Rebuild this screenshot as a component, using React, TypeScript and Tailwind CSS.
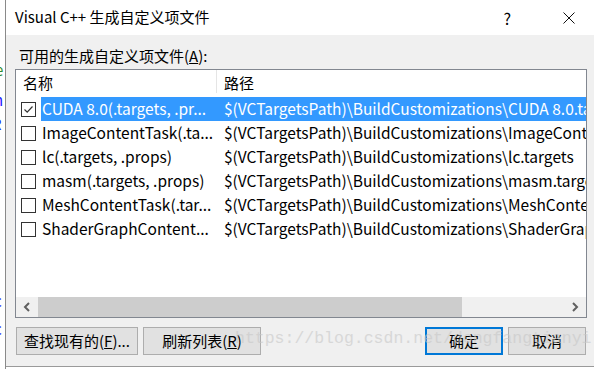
import React from 'react';

const font = { fontFamily: '"Noto Sans CJK SC", "Noto Sans", sans-serif' };

// names are shown already shortened, the way the list control cuts them
const rows = [
  { name: 'CUDA 8.0(.targets, .pr...', path: '$(VCTargetsPath)\\BuildCustomizations\\CUDA 8.0.targets', checked: true },
  { name: 'ImageContentTask(.ta...', path: '$(VCTargetsPath)\\BuildCustomizations\\ImageContentTask.targets', checked: false },
  { name: 'lc(.targets, .props)', path: '$(VCTargetsPath)\\BuildCustomizations\\lc.targets', checked: false },
  { name: 'masm(.targets, .props)', path: '$(VCTargetsPath)\\BuildCustomizations\\masm.targets', checked: false },
  { name: 'MeshContentTask(.tar...', path: '$(VCTargetsPath)\\BuildCustomizations\\MeshContentTask.targets', checked: false },
  { name: 'ShaderGraphContent...', path: '$(VCTargetsPath)\\BuildCustomizations\\ShaderGraphContentTask.targets', checked: false },
];

function Checkbox({ checked }: { checked: boolean }) {
  return (
    <div className="w-[15px] h-[15px] border border-[#333] bg-white flex items-center justify-center shrink-0">
      {checked && (
        <svg width="11" height="11" viewBox="0 0 11 11">
          <path d="M1.5 5.5 L4.2 8.2 L9.5 2.5" fill="none" stroke="#333" strokeWidth="1.2" />
        </svg>
      )}
    </div>
  );
}

function Button({ label, primary, className }: { label: React.ReactNode; primary?: boolean; className: string }) {
  return (
    <button
      className={`h-[28px] shrink-0 bg-[#e1e1e1] text-[15px] text-black flex items-center justify-center ${
        primary ? 'border-2 border-[#0078d7]' : 'border border-[#adadad]'
      } ${className}`}
    >
      {label}
    </button>
  );
}

export default function App() {
  return (
    <div className="w-[594px] h-[369px] flex bg-white overflow-hidden relative" style={font}>
      {/* window behind the dialog */}
      <div className="w-[6px] shrink-0 bg-white border-r border-[#8a8a8a] relative overflow-hidden text-[15px]">
        <span className="absolute left-[-5px] top-[59px] text-[#2e8b2e]">e</span>
        <span className="absolute left-[-6px] top-[89px] text-[#1a1aff]">n</span>
        <span className="absolute left-[-8px] top-[113px] text-[#1a1aff]">R</span>
        <span className="absolute left-[-6px] top-[290px] text-[#1a1aff]">c</span>
        <span className="absolute left-[-6px] top-[318px] text-[#1a1aff]">c</span>
      </div>

      <div className="flex-1 min-w-0 flex flex-col">
        {/* title bar */}
        <div className="h-[35px] bg-white flex items-center pl-[9px] pr-[19px] text-[15px] text-black">
          <span>Visual C++ 生成自定义项文件</span>
          <span className="ml-auto mr-[52px] text-[16px]">?</span>
          <svg width="12" height="12" viewBox="0 0 12 12">
            <path d="M0.5 0.5 L11.5 11.5 M11.5 0.5 L0.5 11.5" stroke="#111" strokeWidth="1" />
          </svg>
        </div>

        {/* body */}
        <div className="flex-1 bg-[#f0f0f0] border-b border-[#9a9a9a] pl-[9px] pr-[7px] flex flex-col min-w-0">
          <div className="pl-[4px] mt-[11px] h-[20px] leading-[20px] text-[15px] text-black">
            可用的生成自定义项文件(<span className="underline">A</span>):
          </div>

          <div className="mt-[3px] h-[249px] border border-[#828790] bg-white flex flex-col overflow-hidden">
            <div className="h-[27px] flex text-[15px] text-black">
              <div className="w-[201px] pl-[7px] pt-[2px] border-r border-[#e5e5e5] h-[23px]">名称</div>
              <div className="pl-[7px] pt-[2px]">路径</div>
            </div>

            <div className="flex flex-col">
              {rows.map((r) => (
                <div key={r.name} className="h-[24px] flex items-center text-[15.5px]">
                  <div className="pl-[5px] w-[25px] shrink-0">
                    <Checkbox checked={r.checked} />
                  </div>
                  <div className={`flex-1 h-full flex items-center min-w-0 ${r.checked ? 'bg-[#3399ff] text-white' : 'text-black'}`}>
                    <div className="w-[176px] shrink-0 pl-[1px] whitespace-nowrap overflow-hidden">{r.name}</div>
                    <div className="flex-1 min-w-0 pl-[7px] whitespace-nowrap overflow-hidden">{r.path}</div>
                  </div>
                </div>
              ))}
            </div>

            {/* horizontal scrollbar */}
            <div className="mt-auto h-[20px] flex bg-[#f0f0f0] shrink-0">
              <div className="w-[22px] flex items-center justify-center">
                <svg width="8" height="10" viewBox="0 0 8 10">
                  <path d="M6 1 L2 5 L6 9" fill="none" stroke="#606060" strokeWidth="2" />
                </svg>
              </div>
              <div className="w-[424px] bg-[#cdcdcd]" />
              <div className="flex-1" />
              <div className="w-[22px] flex items-center justify-center">
                <svg width="8" height="10" viewBox="0 0 8 10">
                  <path d="M2 1 L6 5 L2 9" fill="none" stroke="#606060" strokeWidth="2" />
                </svg>
              </div>
            </div>
          </div>

          <div className="mt-[9px] flex pl-[1px] pr-[1px]">
            <Button className="w-[122px]" label={<span>查找现有的(<span className="underline">F</span>)...</span>} />
            <Button className="w-[118px] ml-[5px]" label={<span>刷新列表(<span className="underline">R</span>)</span>} />
            <Button className="w-[78px] ml-auto" primary label="确定" />
            <Button className="w-[78px] ml-[5px]" label="取消" />
          </div>
        </div>
        <div className="h-[2px] bg-white" />
      </div>

      {/* watermark */}
      <div
        className="absolute left-[235px] top-[327px] text-[16.5px] text-[#c8c8c8] opacity-60 pointer-events-none whitespace-nowrap"
        style={{ fontFamily: '"Liberation Mono", monospace' }}
      >
        https://blog.csdn.net/dongfangtianyi
      </div>
    </div>
  );
}
